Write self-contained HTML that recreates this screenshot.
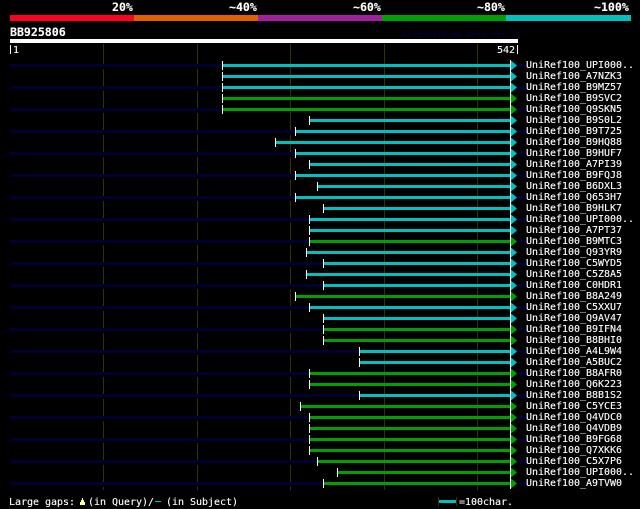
<!DOCTYPE html>
<html><head><meta charset="utf-8"><title>AlignView</title>
<style>
html,body{margin:0;padding:0;background:#000;width:640px;height:509px;overflow:hidden}
svg{display:block}
rect{shape-rendering:crispEdges}
text{font-family:"DejaVu Sans Mono","Liberation Mono",monospace;fill:#fff;font-size:10px;letter-spacing:-.02px;white-space:pre;stroke:#fff;stroke-width:.12px}
.b{font-weight:bold;font-size:11.6px;letter-spacing:-.02px}
.k{fill:#000}.d{fill:#000033}.w{fill:#fff}.gr{fill:#333300}
.t{fill:#00c0c0}.g{fill:#00a000}
</style></head><body>
<svg width="640" height="509" viewBox="0 0 640 509" xmlns="http://www.w3.org/2000/svg">
<defs><g id="e"><rect class="w" x="510" y="-4" width="1" height="11"/><polygon points="511,-3.5 517,1.5 511,6.5"/></g>
<rect id="r" class="d" x="517" width="10" height="3"/></defs>
<rect class="k" width="640" height="509"/>
<rect x="10" y="15" width="124" height="6" fill="#ff0020"/>
<rect x="134" y="15" width="124" height="6" fill="#e06000"/>
<rect x="258" y="15" width="124" height="6" fill="#a020a0"/>
<rect x="382" y="15" width="124" height="6" fill="#00a000"/>
<rect x="506" y="15" width="125" height="6" fill="#00c0c0"/>
<text class="b" x="112" y="11">20%</text>
<text class="b" x="229" y="11">~40%</text>
<text class="b" x="353" y="11">~60%</text>
<text class="b" x="477" y="11">~80%</text>
<text class="b" x="594" y="11">~100%</text>
<text class="b" x="10" y="36">BB925806</text>
<text x="402" y="37" style="fill:#000033;stroke:none;font-size:8.3px;font-weight:bold">AlignView.pm Beta rel.7</text>
<rect x="10" y="39" width="508" height="4" fill="#fff"/>
<rect x="10" y="45" width="1" height="9" fill="#fff"/>
<text x="13" y="53">1</text>
<text x="497" y="53">542</text>
<rect x="517" y="45" width="1" height="9" fill="#fff"/>
<rect class="gr" x="103" y="44" width="1" height="446"/>
<rect class="gr" x="197" y="44" width="1" height="446"/>
<rect class="gr" x="290" y="44" width="1" height="446"/>
<rect class="gr" x="384" y="44" width="1" height="446"/>
<rect class="gr" x="477" y="44" width="1" height="446"/>

<g class="t" transform="translate(0,64)"><rect class="k" x="10" width="212" height="5"/><rect class="d" x="10" width="212" height="3"/><rect class="w" x="222" y="-3" width="1" height="9"/><rect x="223" width="287" height="3"/><use href="#e"/><use href="#r"/></g>
<g class="t" transform="translate(0,75)"><rect class="w" x="222" y="-3" width="1" height="9"/><rect x="223" width="287" height="3"/><use href="#e"/></g>
<g class="t" transform="translate(0,86)"><rect class="k" x="10" width="212" height="5"/><rect class="d" x="10" width="212" height="3"/><rect class="w" x="222" y="-3" width="1" height="9"/><rect x="223" width="287" height="3"/><use href="#e"/><use href="#r"/></g>
<g class="g" transform="translate(0,97)"><rect class="w" x="222" y="-3" width="1" height="9"/><rect x="223" width="287" height="3"/><use href="#e"/></g>
<g class="g" transform="translate(0,108)"><rect class="k" x="10" width="212" height="5"/><rect class="d" x="10" width="212" height="3"/><rect class="w" x="222" y="-3" width="1" height="9"/><rect x="223" width="287" height="3"/><use href="#e"/><use href="#r"/></g>
<g class="t" transform="translate(0,119)"><rect class="w" x="309" y="-3" width="1" height="9"/><rect x="310" width="200" height="3"/><use href="#e"/></g>
<g class="t" transform="translate(0,130)"><rect class="k" x="10" width="285" height="5"/><rect class="d" x="10" width="285" height="3"/><rect class="w" x="295" y="-3" width="1" height="9"/><rect x="296" width="214" height="3"/><use href="#e"/><use href="#r"/></g>
<g class="t" transform="translate(0,141)"><rect class="w" x="275" y="-3" width="1" height="9"/><rect x="276" width="234" height="3"/><use href="#e"/></g>
<g class="t" transform="translate(0,152)"><rect class="k" x="10" width="285" height="5"/><rect class="d" x="10" width="285" height="3"/><rect class="w" x="295" y="-3" width="1" height="9"/><rect x="296" width="214" height="3"/><use href="#e"/><use href="#r"/></g>
<g class="t" transform="translate(0,163)"><rect class="w" x="309" y="-3" width="1" height="9"/><rect x="310" width="200" height="3"/><use href="#e"/></g>
<g class="t" transform="translate(0,174)"><rect class="k" x="10" width="285" height="5"/><rect class="d" x="10" width="285" height="3"/><rect class="w" x="295" y="-3" width="1" height="9"/><rect x="296" width="214" height="3"/><use href="#e"/><use href="#r"/></g>
<g class="t" transform="translate(0,185)"><rect class="w" x="317" y="-3" width="1" height="9"/><rect x="318" width="192" height="3"/><use href="#e"/></g>
<g class="t" transform="translate(0,196)"><rect class="k" x="10" width="285" height="5"/><rect class="d" x="10" width="285" height="3"/><rect class="w" x="295" y="-3" width="1" height="9"/><rect x="296" width="214" height="3"/><use href="#e"/><use href="#r"/></g>
<g class="t" transform="translate(0,207)"><rect class="w" x="323" y="-3" width="1" height="9"/><rect x="324" width="186" height="3"/><use href="#e"/></g>
<g class="t" transform="translate(0,218)"><rect class="k" x="10" width="299" height="5"/><rect class="d" x="10" width="299" height="3"/><rect class="w" x="309" y="-3" width="1" height="9"/><rect x="310" width="200" height="3"/><use href="#e"/><use href="#r"/></g>
<g class="t" transform="translate(0,229)"><rect class="w" x="309" y="-3" width="1" height="9"/><rect x="310" width="200" height="3"/><use href="#e"/></g>
<g class="g" transform="translate(0,240)"><rect class="k" x="10" width="299" height="5"/><rect class="d" x="10" width="299" height="3"/><rect class="w" x="309" y="-3" width="1" height="9"/><rect x="310" width="200" height="3"/><use href="#e"/><use href="#r"/></g>
<g class="t" transform="translate(0,251)"><rect class="w" x="306" y="-3" width="1" height="9"/><rect x="307" width="203" height="3"/><use href="#e"/></g>
<g class="t" transform="translate(0,262)"><rect class="k" x="10" width="313" height="5"/><rect class="d" x="10" width="313" height="3"/><rect class="w" x="323" y="-3" width="1" height="9"/><rect x="324" width="186" height="3"/><use href="#e"/><use href="#r"/></g>
<g class="t" transform="translate(0,273)"><rect class="w" x="306" y="-3" width="1" height="9"/><rect x="307" width="203" height="3"/><use href="#e"/></g>
<g class="t" transform="translate(0,284)"><rect class="k" x="10" width="313" height="5"/><rect class="d" x="10" width="313" height="3"/><rect class="w" x="323" y="-3" width="1" height="9"/><rect x="324" width="186" height="3"/><use href="#e"/><use href="#r"/></g>
<g class="g" transform="translate(0,295)"><rect class="w" x="295" y="-3" width="1" height="9"/><rect x="296" width="214" height="3"/><use href="#e"/></g>
<g class="t" transform="translate(0,306)"><rect class="k" x="10" width="299" height="5"/><rect class="d" x="10" width="299" height="3"/><rect class="w" x="309" y="-3" width="1" height="9"/><rect x="310" width="200" height="3"/><use href="#e"/><use href="#r"/></g>
<g class="t" transform="translate(0,317)"><rect class="w" x="323" y="-3" width="1" height="9"/><rect x="324" width="186" height="3"/><use href="#e"/></g>
<g class="g" transform="translate(0,328)"><rect class="k" x="10" width="313" height="5"/><rect class="d" x="10" width="313" height="3"/><rect class="w" x="323" y="-3" width="1" height="9"/><rect x="324" width="186" height="3"/><use href="#e"/><use href="#r"/></g>
<g class="g" transform="translate(0,339)"><rect class="w" x="323" y="-3" width="1" height="9"/><rect x="324" width="186" height="3"/><use href="#e"/></g>
<g class="t" transform="translate(0,350)"><rect class="k" x="10" width="349" height="5"/><rect class="d" x="10" width="349" height="3"/><rect class="w" x="359" y="-3" width="1" height="9"/><rect x="360" width="150" height="3"/><use href="#e"/><use href="#r"/></g>
<g class="t" transform="translate(0,361)"><rect class="w" x="359" y="-3" width="1" height="9"/><rect x="360" width="150" height="3"/><use href="#e"/></g>
<g class="g" transform="translate(0,372)"><rect class="k" x="10" width="299" height="5"/><rect class="d" x="10" width="299" height="3"/><rect class="w" x="309" y="-3" width="1" height="9"/><rect x="310" width="200" height="3"/><use href="#e"/><use href="#r"/></g>
<g class="g" transform="translate(0,383)"><rect class="w" x="309" y="-3" width="1" height="9"/><rect x="310" width="200" height="3"/><use href="#e"/></g>
<g class="t" transform="translate(0,394)"><rect class="k" x="10" width="349" height="5"/><rect class="d" x="10" width="349" height="3"/><rect class="w" x="359" y="-3" width="1" height="9"/><rect x="360" width="150" height="3"/><use href="#e"/><use href="#r"/></g>
<g class="g" transform="translate(0,405)"><rect class="w" x="300" y="-3" width="1" height="9"/><rect x="301" width="209" height="3"/><use href="#e"/></g>
<g class="g" transform="translate(0,416)"><rect class="k" x="10" width="299" height="5"/><rect class="d" x="10" width="299" height="3"/><rect class="w" x="309" y="-3" width="1" height="9"/><rect x="310" width="200" height="3"/><use href="#e"/><use href="#r"/></g>
<g class="g" transform="translate(0,427)"><rect class="w" x="309" y="-3" width="1" height="9"/><rect x="310" width="200" height="3"/><use href="#e"/></g>
<g class="g" transform="translate(0,438)"><rect class="k" x="10" width="299" height="5"/><rect class="d" x="10" width="299" height="3"/><rect class="w" x="309" y="-3" width="1" height="9"/><rect x="310" width="200" height="3"/><use href="#e"/><use href="#r"/></g>
<g class="g" transform="translate(0,449)"><rect class="w" x="309" y="-3" width="1" height="9"/><rect x="310" width="200" height="3"/><use href="#e"/></g>
<g class="g" transform="translate(0,460)"><rect class="k" x="10" width="307" height="5"/><rect class="d" x="10" width="307" height="3"/><rect class="w" x="317" y="-3" width="1" height="9"/><rect x="318" width="192" height="3"/><use href="#e"/><use href="#r"/></g>
<g class="g" transform="translate(0,471)"><rect class="w" x="337" y="-3" width="1" height="9"/><rect x="338" width="172" height="3"/><use href="#e"/></g>
<g class="g" transform="translate(0,482)"><rect class="k" x="10" width="313" height="5"/><rect class="d" x="10" width="313" height="3"/><rect class="w" x="323" y="-3" width="1" height="9"/><rect x="324" width="186" height="3"/><use href="#e"/><use href="#r"/></g>

<text x="526" y="68">UniRef100_UPI000..</text>
<text x="526" y="79">UniRef100_A7NZK3</text>
<text x="526" y="90">UniRef100_B9MZ57</text>
<text x="526" y="101">UniRef100_B9SVC2</text>
<text x="526" y="112">UniRef100_Q9SKN5</text>
<text x="526" y="123">UniRef100_B9S0L2</text>
<text x="526" y="134">UniRef100_B9T725</text>
<text x="526" y="145">UniRef100_B9HQ88</text>
<text x="526" y="156">UniRef100_B9HUF7</text>
<text x="526" y="167">UniRef100_A7PI39</text>
<text x="526" y="178">UniRef100_B9FQJ8</text>
<text x="526" y="189">UniRef100_B6DXL3</text>
<text x="526" y="200">UniRef100_Q653H7</text>
<text x="526" y="211">UniRef100_B9HLK7</text>
<text x="526" y="222">UniRef100_UPI000..</text>
<text x="526" y="233">UniRef100_A7PT37</text>
<text x="526" y="244">UniRef100_B9MTC3</text>
<text x="526" y="255">UniRef100_Q93YR9</text>
<text x="526" y="266">UniRef100_C5WYD5</text>
<text x="526" y="277">UniRef100_C5Z8A5</text>
<text x="526" y="288">UniRef100_C0HDR1</text>
<text x="526" y="299">UniRef100_B8A249</text>
<text x="526" y="310">UniRef100_C5XXU7</text>
<text x="526" y="321">UniRef100_Q9AV47</text>
<text x="526" y="332">UniRef100_B9IFN4</text>
<text x="526" y="343">UniRef100_B8BHI0</text>
<text x="526" y="354">UniRef100_A4L9W4</text>
<text x="526" y="365">UniRef100_A5BUC2</text>
<text x="526" y="376">UniRef100_B8AFR0</text>
<text x="526" y="387">UniRef100_Q6K223</text>
<text x="526" y="398">UniRef100_B8B1S2</text>
<text x="526" y="409">UniRef100_C5YCE3</text>
<text x="526" y="420">UniRef100_Q4VDC0</text>
<text x="526" y="431">UniRef100_Q4VDB9</text>
<text x="526" y="442">UniRef100_B9FG68</text>
<text x="526" y="453">UniRef100_Q7XKK6</text>
<text x="526" y="464">UniRef100_C5X7P6</text>
<text x="526" y="475">UniRef100_UPI000..</text>
<text x="526" y="486">UniRef100_A9TVW0</text>

<text x="9" y="505">Large gaps:</text>
<polygon points="82,498 83,498 83,500 84,500 84,502 85,502 85,505 80,505 80,502 81,502 81,500 82,500" fill="#ffff99"/>
<text x="88" y="505">(in Query)/</text>
<rect x="155" y="501" width="6" height="1" fill="#00c0c0"/>
<text x="166" y="505">(in Subject)</text>
<rect class="gr" x="438" y="497" width="1" height="9"/>
<rect class="gr" x="456" y="497" width="1" height="9"/>
<rect class="t" x="439" y="500" width="17" height="3"/>
<text x="459" y="505">=100char.</text>
</svg>
</body></html>
